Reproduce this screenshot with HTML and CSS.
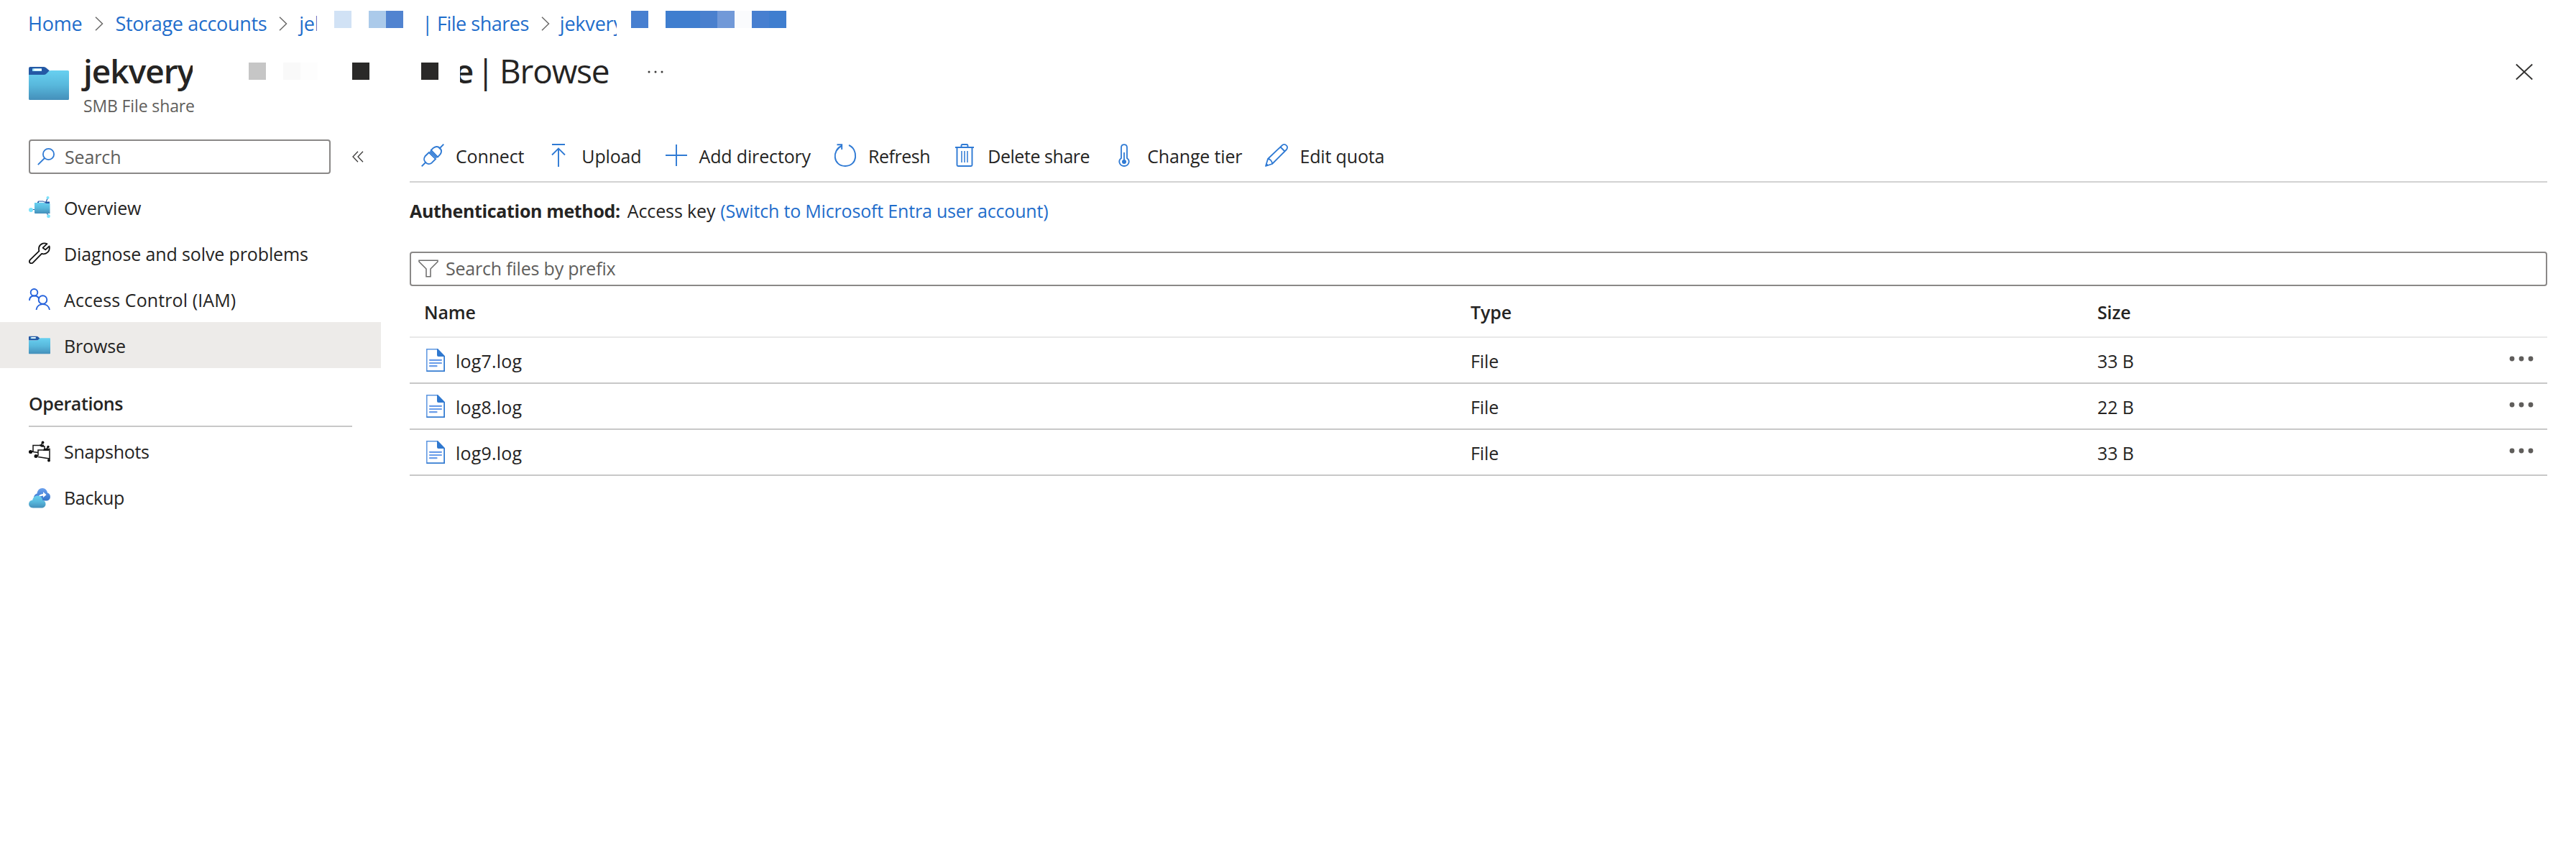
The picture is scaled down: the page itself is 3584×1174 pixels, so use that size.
FILE: index.html
```html
<!DOCTYPE html>
<html lang="en">
<head>
<meta charset="utf-8">
<title>Browse - File share</title>
<link rel="stylesheet" href="styles.css">
</head>
<body>
<svg class="defs" aria-hidden="true">
  <defs>
    <linearGradient id="sky" x1="0" y1="0" x2="0" y2="1"><stop offset="0" stop-color="#68d0f0"/><stop offset=".5" stop-color="#58b8dc"/><stop offset="1" stop-color="#448fba"/></linearGradient>
    <linearGradient id="deep" x1="0" y1="0" x2="0" y2="1"><stop offset="0" stop-color="#6aa0ee"/><stop offset="1" stop-color="#3474ca"/></linearGradient>
    <symbol id="folder" viewBox="0 0 56 48">
      <path d="M0 3.2Q0 1 2 1H21Q23 1 24.400 2.500L29 6.500 24 12H0z" fill="#2459a5"/>
      <path d="M0 12H21Q23 12 24.500 10.500L28 7Q29 6 31 6H54.500Q56 6 56 7.500V45.500Q56 47 54.500 47H1.500Q0 47 0 45.500z" fill="url(#sky)"/>
      <rect x="5" y="3.300" width="13" height="3.800" rx=".6" fill="#9be8fa"/><rect x="7.500" y="3.600" width="10.500" height="2.600" fill="#fff"/>
    </symbol>
    <symbol id="chevron" viewBox="0 0 12 20"><path d="M1 .7 10.500 10 1 19.300" fill="none" stroke="#6b6a69" stroke-width="1.500"/></symbol>
    <symbol id="file" viewBox="0 0 26 32">
      <path d="M.8.8H15.500L25.200 10.500V31.200H.8z" fill="#fff" stroke="#5b95e0" stroke-width="1.500"/>
      <path d="M25.200 11V31.200H.8" fill="none" stroke="#3079d0" stroke-width="1.500"/>
      <path d="M15 0H16L26 10.500V11H17Q15 11 15 9z" fill="#2f78cf"/>
      <path d="M5 15.800H21M5 20H21M5 24.200H14.500" stroke="#6a9de9" stroke-width="2.200" stroke-linecap="round"/>
    </symbol>
    <symbol id="more" viewBox="0 0 34 8"><g fill="#5f5d5b"><circle cx="4" cy="4" r="3.400"/><circle cx="17" cy="4" r="3.400"/><circle cx="30" cy="4" r="3.400"/></g></symbol>
  </defs>
</svg>

<nav class="crumbs">
  <a>Home</a>
  <svg class="chev"><use href="#chevron"/></svg>
  <a class="long">Storage accounts</a>
  <svg class="chev"><use href="#chevron"/></svg>
  <a class="cut cut-account">jek</a>
  <span class="mask mask-account"><i class="b1"></i><i></i><i class="b2"></i><i class="b3"></i></span>
  <a class="shares">| File shares</a>
  <svg class="chev"><use href="#chevron"/></svg>
  <a class="cut cut-share">jekvery</a>
  <span class="mask mask-share"><i class="b4"></i><i></i><i class="b5"></i><i class="b5"></i><i class="b6"></i><i class="b7"></i><i class="b8"></i><i class="b4"></i><i class="b5"></i></span>
</nav>

<header class="head">
  <svg class="head-icon"><use href="#folder"/></svg>
  <div class="head-text">
    <h1 class="title">
      <b class="cut cut-title">jekvery</b>
      <span class="mask mask-title"><i class="g1"></i><i></i><i class="g2"></i><i class="g3"></i><i></i><i></i><i class="g4"></i><i></i><i></i><i></i><i class="g4"></i></span>
      <b class="cut cut-end">e</b>
      <span class="bar">|</span>
      <span class="page">Browse</span>
      <svg class="title-more" viewBox="0 0 22 4"><g fill="#3b3a39"><circle cx="2" cy="2" r="1.500"/><circle cx="11" cy="2" r="1.500"/><circle cx="20" cy="2" r="1.500"/></g></svg>
    </h1>
    <p class="subtitle">SMB File share</p>
  </div>
  <svg class="close" viewBox="0 0 24 24"><path d="M.8 1.500 23.200 22.500M23.200 1.500.8 22.500" stroke="#323130" stroke-width="1.800"/></svg>
</header>

<div class="body">
  <aside class="side">
    <div class="side-top">
      <div class="box search">
        <svg class="search-icon" viewBox="0 0 24 24"><g fill="none" stroke="#2f7ad4" stroke-width="1.800"><circle cx="15.500" cy="8.500" r="7.600"/><path d="M10 14 .8 23.200"/></g></svg>
        <span>Search</span>
      </div>
      <svg class="collapse" viewBox="0 0 16 16"><path d="M8 .8 1 8 8 15.200M15 .8 8 8 15 15.200" fill="none" stroke="#3b3a39" stroke-width="1.300"/></svg>
    </div>
    <ul class="menu">
      <li>
        <svg class="mi" viewBox="0 0 30 30"><path d="M3 18.500H10M24 8 26.500 2M24 22 27.500 27" stroke="#2459a5" stroke-width="1.200"/><path d="M12 8 13.500 6.500H20L22 7.500H29V13H12z" fill="#2459a5"/><path d="M14 7.500H20L24 9.500H14z" fill="#e9f7fd"/><path d="M8 9H20L23 10H29.500V24H9Q8 24 8 23z" fill="url(#sky)"/><g fill="#7ce2fb"><circle cx="3" cy="19" r="3"/><circle cx="26.500" cy="2" r="2"/><circle cx="27.500" cy="27.700" r="2.400"/></g></svg>
        <span>Overview</span></li>
      <li>
        <svg class="mi" viewBox="0 0 30 30"><path d="M25.500 2.200C20 -.4 13.800 3.500 14 9.500Q14 11.500 14.500 12.200L1.900 24.300C.4 26 .7 28 1.800 28.700 3 29.700 4.700 29.400 5.800 28.400L18 15.900C24.500 17.800 30.200 12.200 28.600 5.500L23.200 10.400 19.600 7.700z" fill="none" stroke="#111" stroke-width="1.800" stroke-linejoin="round"/></svg>
        <span>Diagnose and solve problems</span></li>
      <li>
        <svg class="mi" viewBox="0 0 30 30"><g fill="none" stroke="#2562dc" stroke-width="1.900"><circle cx="7.500" cy="5.800" r="4.800"/><path d="M1 17C1 9 12 8.500 14.500 15"/><circle cx="19.500" cy="16" r="5.800"/><path d="M10.500 30C12 19.500 27 19.500 29 30"/></g></svg>
        <span class="iam">Access Control (IAM)</span></li>
      <li class="on">
        <svg class="mi folder"><use href="#folder"/></svg>
        <span>Browse</span></li>
    </ul>
    <h2 class="group">Operations</h2>
    <ul class="menu">
      <li>
        <svg class="mi" viewBox="0 0 30 30"><g fill="none" stroke="#151515" stroke-width="1.500"><path d="M6 16V6.500H16L18 8H22V11M6 14.500 2.500 16M17 6 19.500 2.500M6 15.500 13 16.500"/><path d="M13 21V13H21L23 11.500H29V25L13 22.500M13 21 10 22.500M25 11 27 8.500M28.500 24 28 28"/></g><path d="M15 5.500H21V8H16zM21 11H28V14H20z" fill="#151515"/><g fill="#111"><circle cx="2.500" cy="15.500" r="2.600"/><circle cx="19.500" cy="2.500" r="1.900"/><circle cx="10" cy="21.500" r="2.500"/><circle cx="27" cy="8.500" r="1.700"/><circle cx="28" cy="27.500" r="2"/></g></svg>
        <span>Snapshots</span></li>
      <li>
        <svg class="mi" viewBox="0 0 30 30"><path d="M12.500 19.500C7.500 19.500 6 15 8 12Q9 10 11.500 9.500C12 5 15 2 19 2 23 2 25.500 5 26 8.500 31.500 9.500 31.500 19.500 24.500 19.500z" fill="url(#deep)"/><path d="M13 15Q14 10.500 20 10V7.300L24.500 11.300 20 15V12.600Q16 12.700 13 15z" fill="#fff"/><path d="M6 29.500C-1.500 29.500-2 19.500 5.200 18.800 6 14.500 9 12.500 12.500 12.500 16.500 12.500 19 15.500 19.300 19 25 19.500 25 29 18.800 29.500z" fill="url(#sky)"/></svg>
        <span>Backup</span></li>
    </ul>
  </aside>

  <main class="main">
    <div class="tools">
      <button><svg viewBox="0 0 32 32"><g fill="none" stroke="#2f7ad4" stroke-width="1.900"><path d="M.7 31.300 6.500 25.500M25 7 31.300.7M12.300 10.500 21.500 19.700"/><path d="M10.800 12 20 21.200 14.800 26.400C12 28.600 8.500 28.500 6.200 25.800 3.500 23.500 3.500 20 5.500 17.200z"/><path d="M13.700 9 17 5.700C20 3.500 23.500 3.500 26 6 28.500 8.500 28.500 12 26.300 15L23 18.300z"/></g></svg><span>Connect</span></button>
      <button><svg viewBox="0 0 32 32"><path d="M7 1H25M16 32V7M7 15.500 16 6.500 25 15.500" fill="none" stroke="#2f7ad4" stroke-width="1.900"/></svg><span>Upload</span></button>
      <button><svg viewBox="0 0 32 32"><path d="M1 16H31M16 1V31" stroke="#2f7ad4" stroke-width="1.900"/></svg><span>Add directory</span></button>
      <button><svg viewBox="0 0 32 32"><path d="M21 2C34 7 34 31 16 31 -1.500 31-2.500 8.500 11 3M4.500 1.200H11.200V8" fill="none" stroke="#2f7ad4" stroke-width="1.900"/></svg><span class="tight">Refresh</span></button>
      <button><svg viewBox="0 0 32 32"><g fill="none" stroke="#2f7ad4" stroke-width="1.900"><path d="M3 5H29M5.500 5V29.500Q5.500 31 7 31H25Q26.500 31 26.500 29.500V5M11.500 5V2.500Q11.500 1 13 1H19Q20.500 1 20.500 2.500V5"/><path d="M12 10V26M16 10V26M20 10V26" stroke-width="1.500"/></g></svg><span class="tight">Delete share</span></button>
      <button><svg viewBox="0 0 32 32"><path d="M12 20V5C12 -.3 20 -.3 20 5V20C25 23.500 22.500 31 16 31 9.500 31 7 23.500 12 20z" fill="none" stroke="#2f7ad4" stroke-width="1.800"/><path d="M16 12V24" stroke="#2f7ad4" stroke-width="1.800"/><circle cx="16" cy="25" r="3" fill="#2f7ad4"/></svg><span>Change tier</span></button>
      <button><svg viewBox="0 0 32 32"><path d="M1 31 4 21 23.500 2.500C25.500.5 28 .5 29.800 2.300 31.600 4 31.500 6.500 29.500 8.500L10 28zM4 21C7 21 10 24 10 28M21.500 4.500 27.500 10.500" fill="none" stroke="#2f7ad4" stroke-width="1.800" stroke-linejoin="round"/><path d="M1 31 2.200 27 5 29.700z" fill="#2f7ad4"/></svg><span>Edit quota</span></button>
    </div>
    <p class="auth"><b>Authentication method:</b><span>Access key</span><a>(Switch to Microsoft Entra user account)</a></p>
    <div class="box filter">
      <svg class="funnel" viewBox="0 0 28 25"><path d="M1 1.200H27V3L17 13V23.800H11V13L1 3z" fill="none" stroke="#6b6a69" stroke-width="1.500"/></svg>
      <span>Search files by prefix</span>
    </div>
    <div class="table">
      <div class="row th"><span>Name</span><span>Type</span><span>Size</span></div>
      <div class="row"><span class="name"><svg class="file"><use href="#file"/></svg>log7.log</span><span>File</span><span>33 B</span><svg class="more"><use href="#more"/></svg></div>
      <div class="row"><span class="name"><svg class="file"><use href="#file"/></svg>log8.log</span><span>File</span><span>22 B</span><svg class="more"><use href="#more"/></svg></div>
      <div class="row"><span class="name"><svg class="file"><use href="#file"/></svg>log9.log</span><span>File</span><span>33 B</span><svg class="more"><use href="#more"/></svg></div>
    </div>
  </main>
</div>
</body>
</html>
```
FILE: styles.css
```css
* { box-sizing: border-box; margin: 0; padding: 0; }
body {
  background: #fff;
  color: #252423;
  font: 25px/1.36 "Open Sans", "Noto Sans", sans-serif;
  letter-spacing: -0.13px;
  white-space: nowrap;
}
svg { display: block; flex: none; }
i { display: block; width: 24px; height: 24px; }
.defs { position: absolute; width: 0; height: 0; }
a { color: #1f6dcb; }
.cut { overflow: hidden; flex: none; }
.mask { display: flex; align-self: flex-start; flex: none; }

.crumbs { display: flex; align-items: center; height: 65px; padding-left: 39px; font-size: 27px; letter-spacing: -0.2px; }
.crumbs a { line-height: 65px; }
.crumbs .long { letter-spacing: -0.35px; }
.crumbs .shares { letter-spacing: -0.5px; }
.crumbs .chev { width: 12px; height: 20px; margin: 1px 17px 0; }
.cut-account { width: 27px; padding-left: 2px; margin-left: -3px; }
.mask-account { margin: 15px 26px 0 24px; }
.cut-share { width: 83px; padding-left: 4px; margin-left: -7px; }
.mask-share { margin: 15px 0 0 20px; }
.b1 { background: #d1e2f5; }
.b2 { background: #abcaea; }
.b3 { background: #5183d0; }
.b4 { background: #477fd0; }
.b5 { background: #3f7ecf; }
.b6 { background: #4a80ce; }
.b7 { background: #7199d8; }
.b8 { background: #fafbfd; }
.g1 { background: #c6c6c6; }
.g2 { background: #f9f9f9; }
.g3 { background: #fdfdfd; }
.g4 { background: #2a2928; }

.head { display: flex; height: 98px; padding: 0 60px 0 40px; }
.head-icon { width: 56px; height: 48px; margin-top: 27px; }
.head-text { flex: 1; margin-left: 16px; }
.title { display: flex; height: 66px; line-height: 66px; font-size: 46px; font-weight: 400; letter-spacing: -1.2px; }
.title b { font-weight: 600; }
.cut-title { width: 156px; padding-left: 4px; letter-spacing: -1px; }
.mask-title { margin: 22px 30px 0 78px; }
.cut-end { width: 18px; direction: rtl; }
.bar { margin-left: 5px; }
.page { margin-left: 8px; }
.title-more { width: 22px; height: 4px; margin: 33px 0 0 54px; }
.subtitle { margin-left: 4px; color: #605e5c; font-size: 23px; line-height: 32px; }
.close { width: 24px; height: 24px; margin-top: 23px; }

.body { display: grid; grid-template-columns: 530px 1fr; column-gap: 40px; padding-right: 40px; }
.box { display: flex; align-items: center; height: 48px; border: 2px solid #8a8887; border-radius: 4px; color: #605e5c; }
.side { padding-top: 31px; }
.side-top { display: flex; align-items: center; padding-left: 40px; }
.search { width: 420px; padding-left: 10px; gap: 14px; }
.search-icon { width: 24px; height: 24px; }
.collapse { width: 16px; height: 16px; margin-left: 30px; }
.menu { list-style: none; }
.side-top + .menu { margin-top: 14px; }
.menu li { display: flex; align-items: center; height: 64px; padding-left: 40px; gap: 19px; }
.menu span { padding-top: 2px; }
.menu .iam { letter-spacing: 0.1px; }
.group + .menu span { padding-top: 0; letter-spacing: -0.3px; }
.menu .on { background: #edebe9; }
.mi { width: 30px; height: 30px; }
.mi.folder { height: 26px; }
.group { height: 82px; margin: 0 40px 2px; padding-top: 18px; border-bottom: 2px solid #c8c8c8; font-size: 25px; font-weight: 600; line-height: 62px; letter-spacing: -0.4px; }

.tools { display: flex; align-items: center; gap: 32px; height: 91px; padding: 17px 0 0 16px; border-bottom: 2px solid #d2d2d2; }
.tools button { display: flex; align-items: center; gap: 16px; border: 0; background: none; color: inherit; font: inherit; letter-spacing: -0.15px; }
.tools svg { width: 32px; height: 32px; }
.tools span { padding-top: 2px; }
.tools .tight { letter-spacing: -0.45px; }
.auth { display: flex; line-height: 78px; }
.auth b { margin-right: 10px; font-weight: 700; letter-spacing: -0.35px; }
.auth span { margin-right: 7px; }
.auth a { letter-spacing: -0.18px; }
.filter { margin-top: 18px; padding: 0 0 2px 10px; gap: 10px; letter-spacing: -0.2px; }
.funnel { width: 28px; height: 25px; }
.row { display: grid; grid-template-columns: 1456px 872px 1fr 34px; align-items: center; height: 64px; padding: 2px 19px 0 20px; border-bottom: 2px solid #c8c8c8; }
.row.th { height: 72px; border-color: #e8e8e8; font-weight: 600; }
.name { display: flex; align-items: center; gap: 15px; letter-spacing: 0.2px; }
.file { width: 26px; height: 32px; margin: -2px 0 0 3px; }
.more { width: 34px; height: 8px; margin-top: -6px; }
```
